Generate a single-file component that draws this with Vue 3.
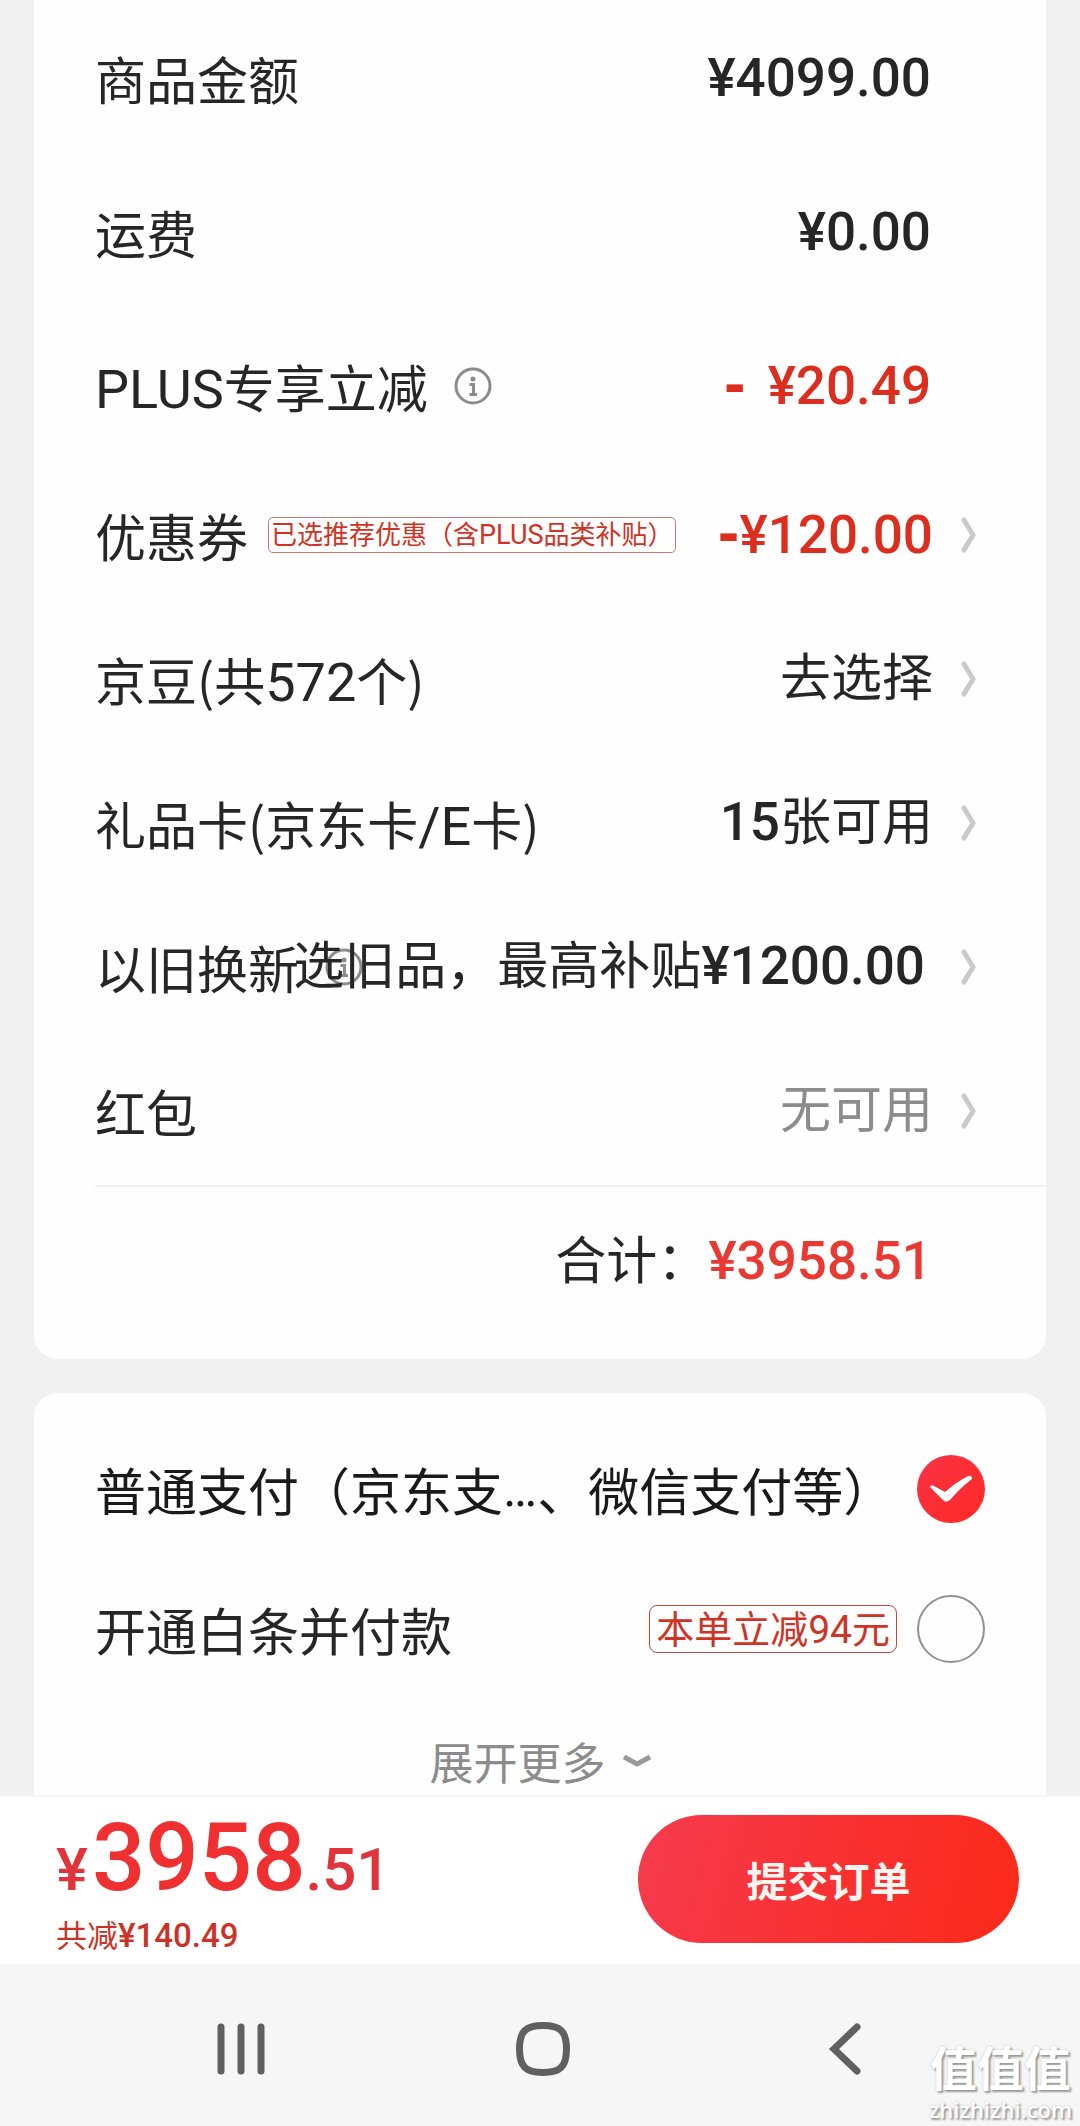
<script setup>
import { ref } from 'vue'

const payment = ref('normal')

const amounts = [
  { label: [{ t: '商品金额' }], value: '¥4099.00' },
  { label: [{ t: '运费' }], value: '¥0.00' },
  { label: [{ t: 'PLUS', latin: true }, { t: '专享立减' }], value: '¥20.49', minus: 'wide', info: true },
]

const options = [
  { label: [{ t: '优惠券' }], value: '¥120.00', minus: 'tight', bold: true, tag: true },
  { label: [{ t: '京豆(共' }, { t: '572', latin: true }, { t: '个)' }], value: '去选择' },
  { label: [{ t: '礼品卡(京东卡' }, { t: '/E', latin: true }, { t: '卡)' }], strong: '15', value: '张可用' },
  { label: [{ t: '以旧换新' }], value: '选旧品，最高补贴', strongAfter: '¥1200.00', info: true, inset: true },
  { label: [{ t: '红包' }], value: '无可用', muted: true },
]
</script>

<template>
  <div class="page">
    <main class="content">
      <section class="card summary">
        <div v-for="(row, i) in amounts" :key="i" class="row amount">
          <span class="label">
            <span><span v-for="(p, j) in row.label" :key="j" :class="{ latin: p.latin }">{{ p.t }}</span></span>
            <button v-if="row.info" type="button" class="info-btn" aria-label="说明">
              <svg class="info" viewBox="0 0 38 38" aria-hidden="true">
                <circle cx="19" cy="19" r="17" />
                <circle class="dot" cx="19" cy="12" r="2.5" />
                <path d="M15.5 17.5H19.5V27M15.5 27.5H23" />
              </svg>
            </button>
          </span>
          <span class="value strong" :class="{ red: row.minus }"><span v-if="row.minus" class="minus" :class="row.minus">-</span>{{ row.value }}</span>
        </div>

        <button v-for="(row, i) in options" :key="'o' + i" type="button" class="row option">
          <span class="label">
            <span><span v-for="(p, j) in row.label" :key="j" :class="{ latin: p.latin }">{{ p.t }}</span></span>
            <span v-if="row.tag" class="tag small-tag">已选推荐优惠（含<span class="latin">PLUS</span>品类补贴）</span>
            <svg v-if="row.info" class="info" viewBox="0 0 38 38" aria-hidden="true">
              <circle cx="19" cy="19" r="17" />
              <circle class="dot" cx="19" cy="12" r="2.5" />
              <path d="M15.5 17.5H19.5V27M15.5 27.5H23" />
            </svg>
          </span>
          <span class="value" :class="{ strong: row.bold, red: row.minus, muted: row.muted, inset: row.inset }"><span v-if="row.minus" class="minus" :class="row.minus">-</span><span v-if="row.strong" class="strong">{{ row.strong }}</span>{{ row.value }}<span v-if="row.strongAfter" class="strong">{{ row.strongAfter }}</span></span>
          <svg class="arrow" viewBox="0 0 15 36" aria-hidden="true"><path d="M3 3L12 18L3 33" /></svg>
        </button>

        <div class="total">
          <span class="value">合计：<span class="strong total-price">¥3958.51</span></span>
        </div>
      </section>

      <section class="card payments">
        <label class="pay-row">
          <span class="label first">普通支付（京东支<span class="ellipsis">…</span>、微信支付等）</span>
          <span class="radio">
            <input v-model="payment" type="radio" name="payment" value="normal">
            <svg v-if="payment === 'normal'" viewBox="0 0 68 68" aria-hidden="true">
              <path d="M13 32Q14 29 17 31L28 37Q38 28 51 21Q55 20 55 24Q43 33 33 45Q29 48 26 45Z" />
            </svg>
          </span>
        </label>
        <label class="pay-row">
          <span class="label">开通白条并付款</span>
          <span class="tag pay-tag">本单立减<span class="latin">94</span>元</span>
          <span class="radio">
            <input v-model="payment" type="radio" name="payment" value="baitiao">
            <svg v-if="payment === 'baitiao'" viewBox="0 0 68 68" aria-hidden="true">
              <path d="M13 32Q14 29 17 31L28 37Q38 28 51 21Q55 20 55 24Q43 33 33 45Q29 48 26 45Z" />
            </svg>
          </span>
        </label>
        <button type="button" class="more">
          展开更多
          <svg viewBox="0 0 28 14" aria-hidden="true"><path d="M1 3L14 10L27 3" /></svg>
        </button>
      </section>
    </main>

    <footer class="submit-bar">
      <div class="pay-info">
        <div class="pay-total">¥<strong>3958</strong>.51</div>
        <div class="saved">共减<span>¥140.49</span></div>
      </div>
      <button type="button" class="submit">提交订单</button>
    </footer>

    <nav class="system-nav">
      <button type="button" aria-label="最近任务">
        <svg width="54" height="54" viewBox="0 0 54 54"><path d="M7 5V49M27 5V49M47 5V49" /></svg>
      </button>
      <button type="button" aria-label="主屏幕">
        <svg width="54" height="54" viewBox="0 0 54 54"><path d="M27 3.5C44 3.5 50.5 9 50.5 27S44 50.5 27 50.5S3.5 45 3.5 27S10 3.5 27 3.5Z" /></svg>
      </button>
      <button type="button" aria-label="返回">
        <svg width="54" height="54" viewBox="0 0 54 54"><path d="M39 5L16 27L39 49" /></svg>
      </button>
      <div class="watermark">
        <span class="mark-name">值值值</span>
        <span class="mark-site">zhizhizhi.com</span>
      </div>
    </nav>
  </div>
</template>

<style>
body {
  margin: 0;
  background: #f1f1f1;
}
</style>

<style scoped>
.page {
  --cjk: "Noto Sans CJK SC", sans-serif;
  --num: Roboto, "Noto Sans CJK SC", sans-serif;
  display: flex;
  flex-direction: column;
  min-height: 100vh;
  background: #f1f1f1;
  color: #262626;
  font-family: var(--cjk);
}

button {
  margin: 0;
  padding: 0;
  border: 0;
  background: none;
  color: inherit;
  font: inherit;
  text-align: left;
  cursor: pointer;
}

.content {
  flex: 1;
  display: flex;
  flex-direction: column;
  gap: 34px;
  padding: 0 34px;
}

.card {
  background: #fefefe;
  border-radius: 24px;
}

.summary {
  display: flex;
  flex-direction: column;
  padding-top: 1px;
  border-radius: 0 0 24px 24px;
}

.payments {
  border-radius: 24px 24px 0 0;
  padding-top: 26px;
}

.row {
  display: flex;
  align-items: center;
  justify-content: space-between;
  padding-left: 61px;
  white-space: nowrap;
}

.amount {
  height: 154px;
  padding-right: 115px;
}

.option {
  height: 144px;
  padding-right: 70px;
}

.label {
  display: flex;
  align-items: center;
  flex: 1 1 0;
  min-width: 0;
  font-size: 51px;
  line-height: 64px;
  white-space: nowrap;
}

.first {
  color: #1a1a1a;
}

.label .latin {
  font-family: var(--num);
  font-size: 54px;
  line-height: 50px;
}

.label .small-tag .latin {
  font-size: 27px;
  line-height: 24px;
}

.ellipsis {
  font-family: Roboto, sans-serif;
  line-height: 50px;
}

.info,
.info-btn {
  flex: none;
  display: block;
  width: 38px;
  height: 38px;
}

.info {
  fill: none;
  stroke: #8c8c8c;
  stroke-width: 3;
}

.info .dot {
  fill: #8c8c8c;
  stroke: none;
}

.label > .info,
.info-btn {
  margin-left: 26px;
}

.value {
  flex: none;
  font-family: var(--num);
  font-size: 51px;
  line-height: 64px;
}

.strong {
  font-size: 53px;
  font-weight: 500;
}

.value .strong {
  line-height: 50px;
}

.inset {
  padding-right: 8px;
}

.red {
  color: #dc2e1e;
}

.muted {
  color: #8c8c8c;
}

.minus {
  font-family: "DejaVu Sans", sans-serif;
  font-weight: 700;
  line-height: 50px;
}

.minus.wide {
  margin-right: 22px;
}

.arrow {
  flex: none;
  width: 15px;
  height: 36px;
  margin-left: 28px;
  fill: none;
  stroke: #cacaca;
  stroke-width: 5;
  stroke-linecap: round;
}

.tag {
  box-sizing: border-box;
  border: 1px solid #c4453a;
  color: #cf3325;
}

.small-tag {
  height: 36px;
  margin-left: 20px;
  padding: 0 2px;
  border-color: #c07a72;
  border-radius: 5px;
  font-size: 26px;
  line-height: 30px;
}

.total {
  display: flex;
  align-items: center;
  justify-content: flex-end;
  height: 146px;
  margin: 2px 0 0 61px;
  padding: 2px 114px 24px 0;
  border-top: 2px solid #f1f1f1;
}

.total-price {
  color: #e83a32;
}

.pay-row {
  display: flex;
  align-items: center;
  height: 140px;
  padding: 0 61px;
  cursor: pointer;
}

.pay-tag {
  height: 48px;
  margin-right: 20px;
  padding: 0 6px;
  border-radius: 8px;
  font-size: 38px;
  line-height: 42px;
  white-space: nowrap;
}

.pay-tag .latin {
  font-family: var(--num);
  font-size: 39px;
  line-height: 34px;
}

.radio {
  position: relative;
  flex: none;
  width: 68px;
  height: 68px;
}

.radio input {
  appearance: none;
  display: block;
  box-sizing: border-box;
  width: 68px;
  height: 68px;
  margin: 0;
  border: 2px solid #929292;
  border-radius: 50%;
}

.radio input:checked {
  border: 0;
  background: linear-gradient(135deg, #fa3246, #ff2a24);
}

.radio svg {
  position: absolute;
  inset: 0;
  fill: #fff;
  pointer-events: none;
}

.more {
  display: flex;
  align-items: center;
  justify-content: center;
  gap: 17px;
  width: 100%;
  height: 96px;
  padding-top: 28px;
  box-sizing: border-box;
  color: #8c8c8c;
  font-size: 44px;
  line-height: 64px;
}

.more svg {
  width: 28px;
  height: 14px;
  fill: none;
  stroke: #999;
  stroke-width: 5;
}

.submit-bar {
  display: flex;
  align-items: flex-start;
  justify-content: space-between;
  padding: 18px 61px 0 56px;
  border-top: 2px solid #f5f5f5;
  background: #fff;
}

.pay-total {
  color: #e0343a;
  font-family: var(--num);
  font-size: 60px;
  font-weight: 500;
  line-height: 60px;
  white-space: nowrap;
}

.pay-total strong {
  margin-left: 4px;
  color: #f03030;
  font-size: 94px;
  font-weight: 500;
  line-height: 86px;
}

.saved {
  margin-top: 20px;
  color: #cc3328;
  font-size: 31px;
  line-height: 26px;
}

.saved span {
  font-family: var(--num);
  font-size: 33px;
  font-weight: 500;
  line-height: 20px;
}

.submit {
  width: 381px;
  height: 128px;
  margin-bottom: 21px;
  border-radius: 64px;
  background: linear-gradient(105deg, #f53b4e, #f93030 55%, #fa2a18);
  color: #fff6f2;
  font-size: 41px;
  font-weight: 700;
  line-height: 48px;
  text-align: center;
}

.system-nav {
  position: relative;
  display: flex;
  align-items: center;
  height: 162px;
  padding: 8px 84px 0 90px;
  box-sizing: border-box;
  background: #f6f6f6;
}

.system-nav button {
  flex: 1;
  display: flex;
  justify-content: center;
}

.system-nav svg {
  fill: none;
  stroke: #606060;
  stroke-width: 7;
  stroke-linecap: round;
}

.watermark {
  position: absolute;
  right: 8px;
  bottom: 4px;
  display: flex;
  flex-direction: column;
  align-items: center;
  color: #fff;
  text-shadow: 2px 2px 2px #999, 0 0 2px #bbb;
}

.mark-name {
  font-size: 47px;
  font-weight: 700;
  line-height: 60px;
}

.mark-site {
  font-family: "Open Sans", sans-serif;
  font-size: 22px;
  font-weight: 600;
  line-height: 26px;
}
</style>
